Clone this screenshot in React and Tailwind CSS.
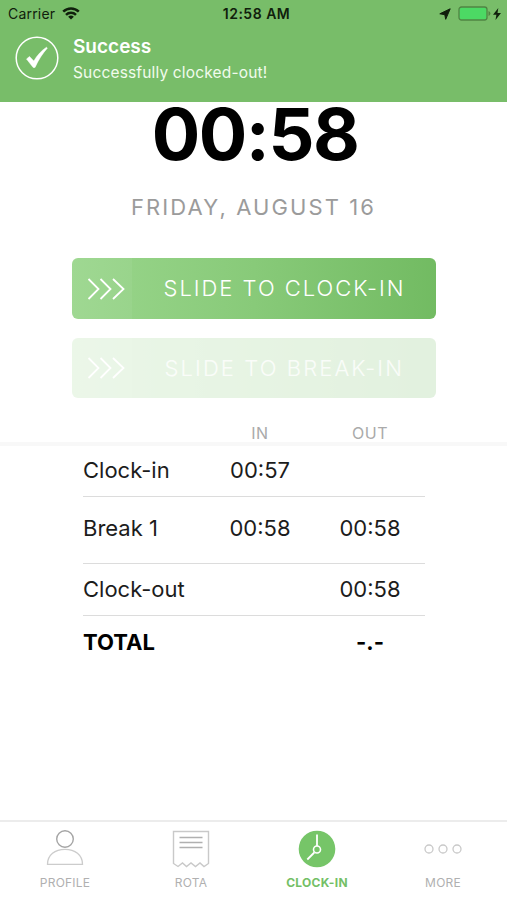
const rows = [
  { label: "Clock-in", in: "00:57", out: "", size: "h-[51px]", pad: "pb-[2px]" },
  { label: "Break 1", in: "00:58", out: "00:58", size: "h-[67px]", pad: "pb-[3px]" },
  { label: "Clock-out", in: "", out: "00:58", size: "h-[52px]", pad: "" },
];

function StatusBar() {
  return (
    <div className="flex h-7 items-center pl-[8px] pr-[5px] text-[14px] text-[#10200c]">
      <div className="flex w-[200px] items-center gap-[7px] pb-px">
        <span className="tracking-[0.2px]">Carrier</span>
        <svg className="h-[13px] w-[18px]" viewBox="0 0 18 13" fill="none" stroke="currentColor" strokeWidth="2.5">
          <path d="M1.2 4.7a11.2 11.2 0 0 1 15.6 0" />
          <path d="M4 7.8a7.2 7.2 0 0 1 10 0" />
          <path d="M9 12.6L6.1 9.8a4.2 4.2 0 0 1 5.8 0z" fill="currentColor" stroke="none" />
        </svg>
      </div>
      <div className="flex-1 whitespace-nowrap pb-px pl-[3px] text-center font-semibold tracking-[0.5px]">12:58 AM</div>
      <div className="flex w-[200px] items-center justify-end pb-px">
        <svg className="mr-[7px] h-[12px] w-[12px]" viewBox="0 0 12 12" fill="currentColor" stroke="currentColor" strokeLinejoin="round">
          <path d="M11.2 .8L.8 5.8l5 .9.9 4.6z" />
        </svg>
        <svg className="h-[15px] w-[33px]" viewBox="0 0 33 15">
          <rect x="1" y="1" width="28" height="13" rx="2.5" fill="#4cd964" stroke="#508443" strokeWidth="1.3" />
          <path d="M30.500 5v5a2.600 2.600 0 0 0 0-5z" fill="#508443" />
        </svg>
        <svg className="ml-[2px] mr-[1px] h-[12px] w-[8px]" viewBox="0 0 8 12" fill="currentColor">
          <path d="M5.3 0L0 6.7h3.4L2.5 12 8 5.1H4.5z" />
        </svg>
      </div>
    </div>
  );
}

function SlideButton({ label, className, textClass }) {
  return (
    <div
      className={`flex w-[364px] items-center overflow-hidden rounded-[6px] bg-linear-to-r from-[#9ad68c] via-[#88ca79] to-[#72bb62] ${className}`}
    >
      <div className="flex h-full w-[60px] items-center bg-white/5 pl-[15px]">
        <svg className="h-[22px] w-[39px]" viewBox="0 0 39 22" fill="none" stroke="white" strokeWidth="1.8">
          <path d="M1.5 1l10 10-10 10M13.5 1l10 10-10 10M26 1l10.5 10-10.5 10" />
        </svg>
      </div>
      <span className={`whitespace-nowrap text-[22px] font-light ${textClass}`}>{label}</span>
    </div>
  );
}

function Tab({ label, active, children }) {
  return (
    <button className="flex w-[126px] flex-col items-center">
      <svg className="h-[40px] w-[40px]" viewBox="0 0 40 40" fill="none">
        {children}
      </svg>
      <span
        className={`mt-[6px] text-[12px] leading-[16px] ${
          active ? "font-bold tracking-[0.3px] text-[#74bf66]" : "font-normal tracking-[0.2px] text-[#b0b0b0]"
        }`}
      >
        {label}
      </span>
    </button>
  );
}

export default function App() {
  return (
    <div className="flex h-[900px] w-[507px] flex-col overflow-hidden bg-white font-['Inter',sans-serif]">
      {/* Success banner */}
      <header className="h-[102px] shrink-0 bg-[#78bd69]">
        <StatusBar />
        <div className="flex pl-[15px] pt-[8px]">
          <svg className="h-[44px] w-[44px]" viewBox="0 0 44 44" fill="none">
            <circle cx="22" cy="22" r="20.8" stroke="white" strokeWidth="1.5" />
            <path
              d="M11.5 23l3-2.500 4.300 4.500C22 19.500 26.500 14.500 31.500 11.200l.8 1C27.500 17.500 23.500 23.700 20 31.500h-1.800z"
              fill="white"
              stroke="white"
              strokeWidth="0.5"
              strokeLinejoin="round"
            />
          </svg>
          <div className="pl-[14px] text-white">
            <p className="text-[19px] font-semibold leading-[22px]">Success</p>
            <p className="mt-[5px] text-[15.5px] leading-[20px] tracking-[0.16px] text-[#f1fbed]">Successfully clocked-out!</p>
          </div>
        </div>
      </header>

      {/* Current time */}
      <section className="flex flex-col items-center">
        <p className="mt-[-4px] pl-[3px] text-[72px] font-bold leading-[72px] tracking-[-1.5px] text-black">00:58</p>
        <p className="mt-[23px] text-[22px] leading-[28px] tracking-[2.1px] text-[#9b9b9b]">FRIDAY, AUGUST 16</p>
        <SlideButton label="SLIDE TO CLOCK-IN" className="mt-[37px] h-[61px]" textClass="pl-[32px] tracking-[1.98px] text-white" />
        <SlideButton label="SLIDE TO BREAK-IN" className="mt-[19px] h-[60px] opacity-20" textClass="pl-[33px] tracking-[2.1px] text-white/80" />
      </section>

      {/* Clocking times */}
      <section className="mt-[24px]">
        <div className="flex h-[24px] items-center border-b-4 border-[#f8f8f8] pl-[83px] pt-[2px] text-[16px] tracking-[0.5px] text-[#aaaaaa]">
          <span className="ml-[122px] w-[110px] text-center">IN</span>
          <span className="w-[110px] text-center">OUT</span>
        </div>
        <div className="ml-[83px] w-[342px] text-[22px] text-[#1c1c1c]">
          {rows.map((row) => (
            <div key={row.label} className={`flex items-center border-b border-[#dcdcdc] ${row.size} ${row.pad}`}>
              <span className="w-[122px]">{row.label}</span>
              <span className="w-[110px] text-center">{row.in}</span>
              <span className="w-[110px] text-center">{row.out}</span>
            </div>
          ))}
          <div className="flex h-[52px] items-center font-bold text-black">
            <span className="w-[232px]">TOTAL</span>
            <span className="w-[110px] text-center">-.-</span>
          </div>
        </div>
      </section>

      {/* Tab bar */}
      <nav className="mt-auto flex h-[80px] border-t-2 border-[#ececec] pl-[2px] pt-[7px]">
        <Tab label="PROFILE">
          <circle cx="20" cy="10" r="8.3" stroke="#a5a5a5" strokeWidth="1.4" />
          <path d="M2.5 35.3C2.5 26 10 20.3 20 20.3S37.5 26 37.5 35.3z" stroke="#cccccc" strokeWidth="1.3" />
        </Tab>
        <Tab label="ROTA">
          <path d="M2.500 2.500h35v32l-4.500 3-4-3.500-4.500 3.500-4.500-3.500-4.500 3.500-4-3.500-4.500 3.500-4.500-3z" stroke="#c9c9c9" strokeWidth="1.4" />
          <path d="M8.5 8.5h23M8.5 13.5h23M8.5 18.5h23" stroke="#b0b0b0" strokeWidth="1.6" />
        </Tab>
        <Tab label="CLOCK-IN" active>
          <circle cx="20" cy="20" r="18.3" fill="#76c568" />
          <circle cx="20" cy="20.5" r="3.5" stroke="white" strokeWidth="1.6" />
          <path d="M20 5.5v11.5M17.3 23.500l-7 7" stroke="white" strokeWidth="1.8" />
        </Tab>
        <Tab label="MORE">
          <circle cx="6" cy="20" r="4" stroke="#c9c9c9" strokeWidth="1.3" />
          <circle cx="20" cy="20" r="4" stroke="#c9c9c9" strokeWidth="1.3" />
          <circle cx="34" cy="20" r="4" stroke="#c9c9c9" strokeWidth="1.3" />
        </Tab>
      </nav>
    </div>
  );
}
